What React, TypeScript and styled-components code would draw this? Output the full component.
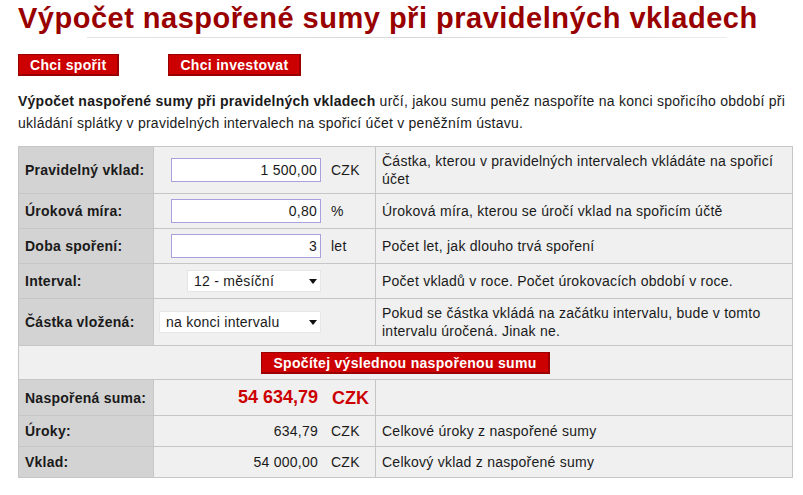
import React from "react";
import styled, { createGlobalStyle } from "styled-components";

const GlobalStyle = createGlobalStyle`
  body {
    margin: 0;
    background: #fff;
    font-family: "Liberation Sans", Arial, sans-serif;
    color: #1a1a1a;
    letter-spacing: 0.25px;
  }
`;

const Page = styled.div`
  padding: 2px 11px 0 18px;
`;

const Title = styled.h1`
  margin: 0;
  font-size: 29px;
  line-height: 32px;
  font-weight: bold;
  letter-spacing: 0.5px;
  color: #990000;
  white-space: nowrap;

  &::after {
    content: "";
    display: block;
    height: 1px;
    margin: 3px 0 0 69px;
    width: 640px;
    background: linear-gradient(to right, #e4e4e4, #d8d8d8 50%, #ececec);
  }
`;

const ButtonBar = styled.div`
  display: flex;
  gap: 49px;
  margin-top: 16px;
`;

const RedButton = styled.button`
  height: 22px;
  padding: 0 11px;
  border: 1px solid #9a0000;
  border-width: 1px 2px 2px 1px;
  background: #cc0000;
  color: #fff;
  font-family: "Liberation Sans", Arial, sans-serif;
  font-size: 14px;
  font-weight: bold;
  letter-spacing: 0.3px;
  line-height: 18px;
  cursor: pointer;
`;

const Intro = styled.p`
  margin: 14px 0 12px;
  font-size: 14px;
  line-height: 22px;
  color: #1a1a1a;
`;

const Table = styled.table`
  width: 775px;
  table-layout: fixed;
  border-collapse: collapse;
  border: 1px solid #cfcfcf;
  font-size: 14px;
  line-height: 18px;
`;

const LabelCell = styled.th`
  width: 122px;
  padding: 5px 6px;
  background: #d3d3d3;
  border: 1px solid #c6c6c6;
  text-align: left;
  font-weight: bold;
  color: #1a1a1a;
  vertical-align: middle;
`;

const ValueCell = styled.td`
  width: 221px;
  padding: 5px 0;
  background: #f0f0f0;
  border: 1px solid #c6c6c6;
  vertical-align: middle;
`;

const DescCell = styled.td`
  padding: 5px 6px;
  background: #f0f0f0;
  border: 1px solid #c6c6c6;
  vertical-align: middle;
  color: #1a1a1a;
`;

const ActionCell = styled.td`
  padding: 6px 0 5px;
  background: #f0f0f0;
  border: 1px solid #c6c6c6;
  text-align: center;
  line-height: 0;
`;

const ValueRow = styled.div`
  display: flex;
  justify-content: flex-end;
  align-items: center;
`;

const Unit = styled.span<{ $big?: boolean }>`
  width: ${(p) => (p.$big ? "43px" : "44px")};
  padding-left: ${(p) => (p.$big ? "11px" : "10px")};
  font-size: ${(p) => (p.$big ? "18px" : "14px")};
  font-weight: ${(p) => (p.$big ? "bold" : "normal")};
  letter-spacing: ${(p) => (p.$big ? "0" : "0.25px")};
  color: ${(p) => (p.$big ? "#cc0000" : "#1a1a1a")};
`;

const NumberInput = styled.input`
  box-sizing: border-box;
  width: 150px;
  height: 24px;
  padding: 0 3px;
  border: 1px solid #a7a1de;
  background: #fff;
  text-align: right;
  font-family: "Liberation Sans", Arial, sans-serif;
  font-size: 14px;
  letter-spacing: 0.25px;
  color: #1a1a1a;
`;

const SelectWrap = styled.div<{ $width: number }>`
  position: relative;
  width: ${(p) => p.$width}px;
  height: 22px;
  margin: 1px 0;

  &::after {
    content: "";
    position: absolute;
    right: 4px;
    top: 9px;
    border-left: 4px solid transparent;
    border-right: 4px solid transparent;
    border-top: 5px solid #111;
    pointer-events: none;
  }
`;

const Select = styled.select`
  appearance: none;
  box-sizing: border-box;
  width: 100%;
  height: 22px;
  padding: 0 16px 0 6px;
  border: 1px solid #e6e6e6;
  border-radius: 0;
  background: #fff;
  font-family: "Liberation Sans", Arial, sans-serif;
  font-size: 14px;
  letter-spacing: 0.25px;
  color: #1a1a1a;
`;

const Amount = styled.span<{ $big?: boolean }>`
  font-size: ${(p) => (p.$big ? "18px" : "14px")};
  font-weight: ${(p) => (p.$big ? "bold" : "normal")};
  letter-spacing: ${(p) => (p.$big ? "0" : "0.25px")};
  color: ${(p) => (p.$big ? "#cc0000" : "#1a1a1a")};
  line-height: ${(p) => (p.$big ? "25px" : "20px")};
  padding-right: 3px;
`;

type InputRow = {
  label: string;
  value: string;
  unit: string;
  desc: string;
};

const inputRows: InputRow[] = [
  {
    label: "Pravidelný vklad:",
    value: "1 500,00",
    unit: "CZK",
    desc: "Částka, kterou v pravidelných intervalech vkládáte na spořicí účet",
  },
  {
    label: "Úroková míra:",
    value: "0,80",
    unit: "%",
    desc: "Úroková míra, kterou se úročí vklad na spořicím účtě",
  },
  {
    label: "Doba spoření:",
    value: "3",
    unit: "let",
    desc: "Počet let, jak dlouho trvá spoření",
  },
];

const results = [
  { label: "Úroky:", value: "634,79", desc: "Celkové úroky z naspořené sumy" },
  { label: "Vklad:", value: "54 000,00", desc: "Celkový vklad z naspořené sumy" },
];

export default function App() {
  return (
    <Page>
      <GlobalStyle />
      <Title>Výpočet naspořené sumy při pravidelných vkladech</Title>

      <ButtonBar>
        <RedButton>Chci spořit</RedButton>
        <RedButton>Chci investovat</RedButton>
      </ButtonBar>

      <Intro>
        <b>Výpočet naspořené sumy při pravidelných vkladech</b> určí, jakou sumu peněz
        naspoříte na konci spořicího období při ukládání splátky v pravidelných
        intervalech na spořicí účet v peněžním ústavu.
      </Intro>

      <Table>
        <tbody>
          {inputRows.map((r) => (
            <tr key={r.label}>
              <LabelCell>{r.label}</LabelCell>
              <ValueCell>
                <ValueRow>
                  <NumberInput defaultValue={r.value} />
                  <Unit>{r.unit}</Unit>
                </ValueRow>
              </ValueCell>
              <DescCell>{r.desc}</DescCell>
            </tr>
          ))}
          <tr>
            <LabelCell>Interval:</LabelCell>
            <ValueCell>
              <ValueRow>
                <SelectWrap $width={134}>
                  <Select defaultValue="12">
                    <option value="12">12 - měsíční</option>
                    <option value="4">4 - čtvrtletní</option>
                    <option value="2">2 - pololetní</option>
                    <option value="1">1 - roční</option>
                  </Select>
                </SelectWrap>
                <Unit />
              </ValueRow>
            </ValueCell>
            <DescCell>Počet vkladů v roce. Počet úrokovacích období v roce.</DescCell>
          </tr>
          <tr>
            <LabelCell>Částka vložená:</LabelCell>
            <ValueCell>
              <ValueRow>
                <SelectWrap $width={162}>
                  <Select defaultValue="end">
                    <option value="end">na konci intervalu</option>
                    <option value="start">na začátku intervalu</option>
                  </Select>
                </SelectWrap>
                <Unit />
              </ValueRow>
            </ValueCell>
            <DescCell>
              Pokud se částka vkládá na začátku intervalu, bude v tomto intervalu
              úročená. Jinak ne.
            </DescCell>
          </tr>
          <tr>
            <ActionCell colSpan={3}>
              <RedButton>Spočítej výslednou naspořenou sumu</RedButton>
            </ActionCell>
          </tr>
          <tr>
            <LabelCell>Naspořená suma:</LabelCell>
            <ValueCell>
              <ValueRow>
                <Amount $big>54 634,79</Amount>
                <Unit $big>CZK</Unit>
              </ValueRow>
            </ValueCell>
            <DescCell />
          </tr>
          {results.map((r) => (
            <tr key={r.label}>
              <LabelCell>{r.label}</LabelCell>
              <ValueCell>
                <ValueRow>
                  <Amount>{r.value}</Amount>
                  <Unit>CZK</Unit>
                </ValueRow>
              </ValueCell>
              <DescCell>{r.desc}</DescCell>
            </tr>
          ))}
        </tbody>
      </Table>
    </Page>
  );
}
